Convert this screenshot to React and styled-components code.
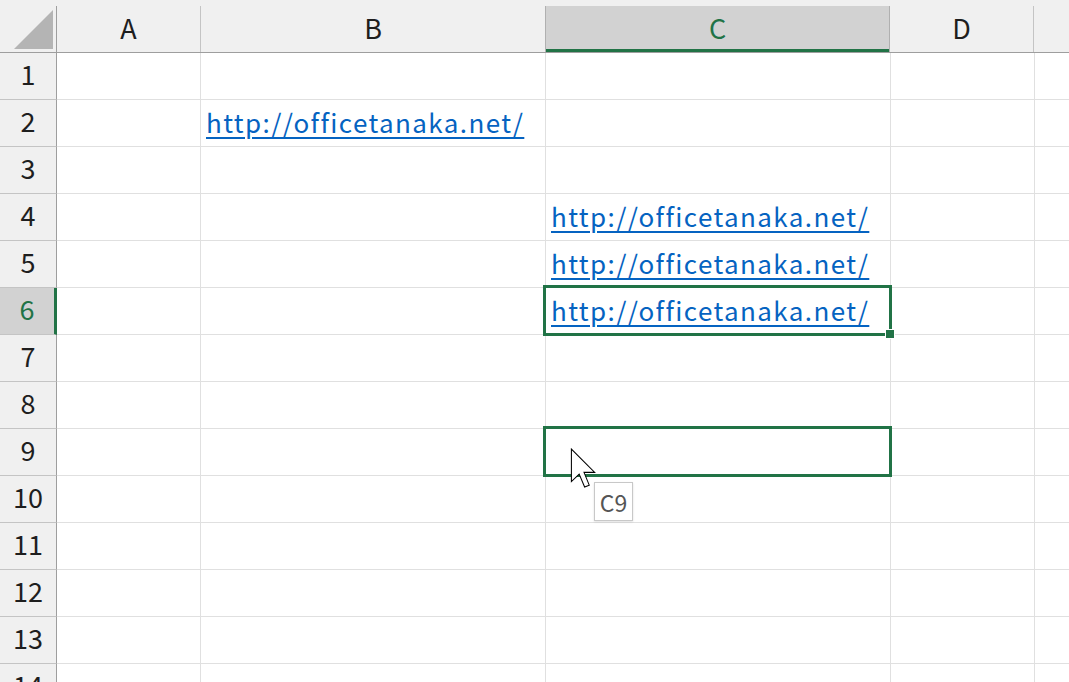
import React from "react";
import styled, { createGlobalStyle } from "styled-components";

const GlobalStyle = createGlobalStyle`
  html, body {
    margin: 0;
    padding: 0;
    background: #ffffff;
  }
  * {
    box-sizing: border-box;
  }
`;

const green = "#217346";
const font = `"Noto Sans CJK JP", "Noto Sans", sans-serif`;

// E is only partly visible at the right edge, so it has no label on screen
const columns = [
  { name: "A", width: 144, label: "A" },
  { name: "B", width: 345, label: "B" },
  { name: "C", width: 345, label: "C" },
  { name: "D", width: 144, label: "D" },
  { name: "E", width: 200, label: "" },
];

const link = "http://officetanaka.net/";

// cell contents, keyed by "col+row"
const contents = {
  B2: link,
  C4: link,
  C5: link,
  C6: link,
};

const Sheet = styled.div`
  position: relative;
  width: 1069px;
  height: 682px;
  overflow: hidden;
  background: #ffffff;
  font-family: ${font};
`;

const TopStrip = styled.div`
  height: 6px;
  background: #f0f0f0;
`;

const HeaderRow = styled.div`
  display: flex;
  height: 47px;
  background: #f0f0f0;
  border-bottom: 1px solid #9e9e9e;
`;

const Corner = styled.div`
  position: relative;
  flex: 0 0 57px;
  border-right: 1px solid #9e9e9e;
  svg {
    position: absolute;
    left: 14px;
    top: 4px;
  }
`;

const ColHead = styled.div`
  flex: 0 0 ${(p) => p.$w}px;
  display: flex;
  align-items: center;
  justify-content: center;
  padding-bottom: 3px;
  font-size: 27px;
  color: ${(p) => (p.$active ? green : "#1e1e1e")};
  background: ${(p) => (p.$active ? "#d2d2d2" : "transparent")};
  border-right: 1px solid ${(p) => (p.$active ? "#b0b0b0" : "#c4c4c4")};
  border-left: ${(p) => (p.$active ? "1px solid #b0b0b0" : "none")};
  box-shadow: ${(p) => (p.$active ? `inset 0 -3px 0 ${green}` : "none")};
  margin-left: ${(p) => (p.$active ? "-1px" : "0")};
`;

const Row = styled.div`
  display: flex;
  height: 47px;
`;

const RowHead = styled.div`
  position: relative;
  flex: 0 0 57px;
  display: flex;
  align-items: center;
  justify-content: center;
  padding-bottom: 6px;
  font-size: 27px;
  color: ${(p) => (p.$active ? green : "#1e1e1e")};
  background: ${(p) => (p.$active ? "#d2d2d2" : "#f0f0f0")};
  border-right: ${(p) => (p.$active ? `3px solid ${green}` : "1px solid #9e9e9e")};
  border-bottom: 1px solid #c4c4c4;
`;

const Cell = styled.div`
  position: relative;
  flex: 0 0 ${(p) => p.$w}px;
  display: flex;
  align-items: flex-end;
  padding: 0 0 9px 5px;
  border-right: 1px solid #e0e0e0;
  border-bottom: 1px solid #e0e0e0;
  white-space: nowrap;
`;

const Link = styled.span`
  font-size: 26px;
  line-height: 30px;
  letter-spacing: 1.4px;
  color: #0563c1;
  text-decoration: underline;
  text-underline-offset: 4px;
  text-decoration-thickness: 1.5px;
`;

const Selection = styled.div`
  position: absolute;
  top: -3px;
  left: -3px;
  right: -2px;
  bottom: -2px;
  border: 3px solid ${green};
  pointer-events: none;
  z-index: 2;
`;

const FillHandle = styled.div`
  position: absolute;
  right: -6px;
  bottom: -6px;
  width: 10px;
  height: 10px;
  background: ${green};
  border: 1px solid #ffffff;
`;

const Tooltip = styled.div`
  position: absolute;
  left: 594px;
  top: 482px;
  width: 39px;
  height: 39px;
  display: flex;
  align-items: center;
  justify-content: center;
  background: #ffffff;
  border: 1px solid #c8c8c8;
  box-shadow: 0 1px 2px rgba(0, 0, 0, 0.12);
  font-size: 23px;
  color: #555555;
  z-index: 3;
`;

const Cursor = styled.svg`
  position: absolute;
  left: 570px;
  top: 448px;
  z-index: 4;
`;

const rows = Array.from({ length: 14 }, (_, i) => i + 1);

export default function App() {
  return (
    <>
      <GlobalStyle />
      <Sheet>
        <TopStrip />
        <HeaderRow>
          <Corner>
            <svg width="40" height="40" viewBox="0 0 40 40">
              <polygon points="39,0 39,39 0,39" fill="#b4b4b4" />
            </svg>
          </Corner>
          {columns.map((c) => (
            <ColHead key={c.name} $w={c.width} $active={c.name === "C"}>
              {c.label}
            </ColHead>
          ))}
        </HeaderRow>
        {rows.map((r) => (
          <Row key={r}>
            <RowHead $active={r === 6}>{r}</RowHead>
            {columns.map((c) => {
              const id = c.name + r;
              return (
                <Cell key={id} $w={c.width}>
                  {contents[id] && <Link>{contents[id]}</Link>}
                  {id === "C6" && (
                    <Selection>
                      <FillHandle />
                    </Selection>
                  )}
                  {id === "C9" && <Selection />}
                </Cell>
              );
            })}
          </Row>
        ))}
        <Cursor width="28" height="42" viewBox="0 0 13 20">
          <path
            d="M0.5 0.5 L0.5 16 L4.2 12.4 L6.8 18.6 L9 17.7 L6.5 11.6 L11.6 11.6 Z"
            fill="#ffffff"
            stroke="#000000"
            strokeWidth="0.5"
            strokeLinejoin="miter"
          />
        </Cursor>
        <Tooltip>C9</Tooltip>
      </Sheet>
    </>
  );
}
